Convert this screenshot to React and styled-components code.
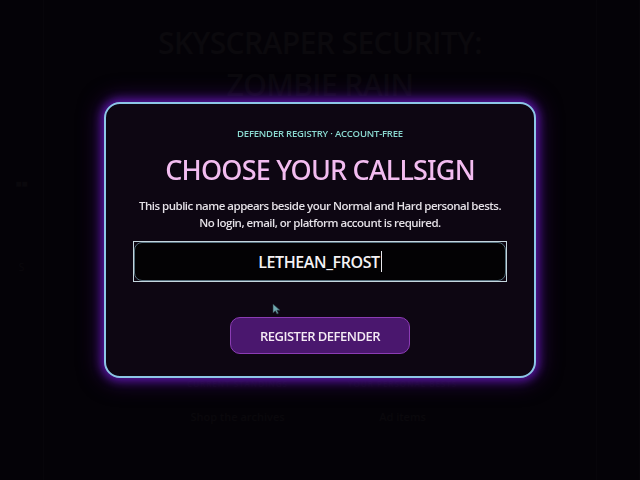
import React, { useState } from 'react';
import styled, { createGlobalStyle } from 'styled-components';

const GlobalStyle = createGlobalStyle`
  html, body {
    margin: 0;
    padding: 0;
    background: #050307;
    font-family: "Open Sans", "Noto Sans", sans-serif;
  }
  * { box-sizing: border-box; }
`;

const Page = styled.div`
  width: 640px;
  height: 480px;
  overflow: hidden;
  display: grid;
  grid-template-columns: 44px 1fr 44px;
  background: #060409;
`;

const Rail = styled.div`
  border-right: 1px solid #0c0a10;
  border-left: ${p => (p.right ? '1px solid #0c0a10' : 'none')};
  padding-top: 176px;
  display: flex;
  flex-direction: column;
  gap: 70px;
  align-items: center;
  color: #121015;
  font-size: 10px;
`;

const Main = styled.main`
  display: flex;
  flex-direction: column;
  align-items: center;
  padding-top: 22px;
`;

const GameTitle = styled.h1`
  margin: 0;
  font-size: 30px;
  line-height: 42px;
  font-weight: 600;
  letter-spacing: -0.6px;
  color: #141217;
  text-align: center;
`;

const Archive = styled.section`
  margin-top: 272px;
  width: 330px;
  display: grid;
  grid-template-columns: 1fr 1fr;
  row-gap: 20px;
  text-align: center;
  color: #121015;
`;

const ArchiveLabel = styled.div`
  font-size: 8px;
  font-weight: 600;
  letter-spacing: 1px;
  color: #0f0d12;
`;

const ArchiveItem = styled.div`
  font-size: 11px;
  font-weight: 600;
`;

const Backdrop = styled.div`
  position: fixed;
  inset: 0;
  display: flex;
  align-items: center;
  justify-content: center;
  background: rgba(3, 2, 5, 0.55);
`;

const Dialog = styled.form`
  width: 432px;
  height: 276px;
  padding: 22px 28px 0;
  border: 2px solid #8cc6e6;
  border-radius: 16px;
  background: #0d0612;
  box-shadow: 0 0 8px 3px rgba(88, 22, 160, 0.95), 0 0 20px 6px rgba(70, 14, 130, 0.5);
  display: flex;
  flex-direction: column;
  align-items: center;
`;

const Eyebrow = styled.div`
  font-size: 9.5px;
  font-weight: 600;
  letter-spacing: -0.2px;
  color: #8ad8d0;
  line-height: 16px;
`;

const Heading = styled.h2`
  margin: 10px 0 0;
  font-family: "Noto Sans", "Open Sans", sans-serif;
  font-size: 27px;
  line-height: 36px;
  font-weight: 500;
  letter-spacing: -0.8px;
  color: #f2bcf0;
`;

const Blurb = styled.p`
  margin: 9px 0 0;
  font-size: 11.5px;
  line-height: 17px;
  font-weight: 600;
  letter-spacing: -0.5px;
  color: #e4e0e6;
  text-align: center;
  white-space: nowrap;
`;

const Field = styled.label`
  position: relative;
  margin-top: 10px;
  width: 374px;
  height: 41px;
  border: 1px solid #c4d6de;
  display: block;
`;

const Inner = styled.div`
  height: 100%;
  border: 1px solid #56707e;
  border-radius: 8px;
  background: #030204;
  display: flex;
  align-items: center;
  justify-content: center;
  color: #f4f2f4;
  font-size: 16px;
  font-weight: 600;
  letter-spacing: -0.4px;
`;

const Caret = styled.span`
  width: 1px;
  height: 21px;
  margin-left: 1px;
  background: #e8e8ec;
`;

const HiddenInput = styled.input`
  position: absolute;
  inset: 0;
  width: 100%;
  border: 0;
  background: transparent;
  color: transparent;
  caret-color: transparent;
  outline: none;
`;

const Submit = styled.button`
  margin-top: 35px;
  width: 180px;
  height: 37px;
  border: 1px solid #8b3cb4;
  border-radius: 10px;
  background: #4a176e;
  color: #f4eaf4;
  font-family: inherit;
  font-size: 13px;
  font-weight: 600;
  letter-spacing: -0.5px;
  cursor: pointer;
`;

const Pointer = styled.svg`
  position: absolute;
  left: 272px;
  top: 303px;
`;

export default function App() {
  const [callsign, setCallsign] = useState('LETHEAN_FROST');

  return (
    <>
      <GlobalStyle />
      <Page>
        <Rail>
          <span>■■</span>
          <span>S</span>
        </Rail>
        <Main>
          <GameTitle>
            SKYSCRAPER SECURITY:
            <br />
            ZOMBIE RAIN
          </GameTitle>
          <Archive>
            <ArchiveLabel>CURRENT STANDINGS</ArchiveLabel>
            <ArchiveLabel>YOUR PERSONAL BESTS</ArchiveLabel>
            <ArchiveItem>Shop the archives</ArchiveItem>
            <ArchiveItem>Ad items</ArchiveItem>
          </Archive>
        </Main>
        <Rail right />
      </Page>

      <Backdrop>
        <Dialog onSubmit={e => e.preventDefault()}>
          <Eyebrow>DEFENDER REGISTRY · ACCOUNT-FREE</Eyebrow>
          <Heading>CHOOSE YOUR CALLSIGN</Heading>
          <Blurb>
            This public name appears beside your Normal and Hard personal bests.
            <br />
            No login, email, or platform account is required.
          </Blurb>
          <Field>
            <Inner>
              {callsign}
              <Caret />
            </Inner>
            <HiddenInput value={callsign} onChange={e => setCallsign(e.target.value)} />
          </Field>
          <Submit type="submit">REGISTER DEFENDER</Submit>
        </Dialog>
        <Pointer width="9" height="12" viewBox="0 0 9 12">
          <path d="M1 1 L1 10 L3.4 7.8 L5 11 L6.4 10.3 L4.9 7.2 L8 7.2 Z" fill="#6fa8b0" stroke="#2a3a40" strokeWidth="0.6" />
        </Pointer>
      </Backdrop>
    </>
  );
}
